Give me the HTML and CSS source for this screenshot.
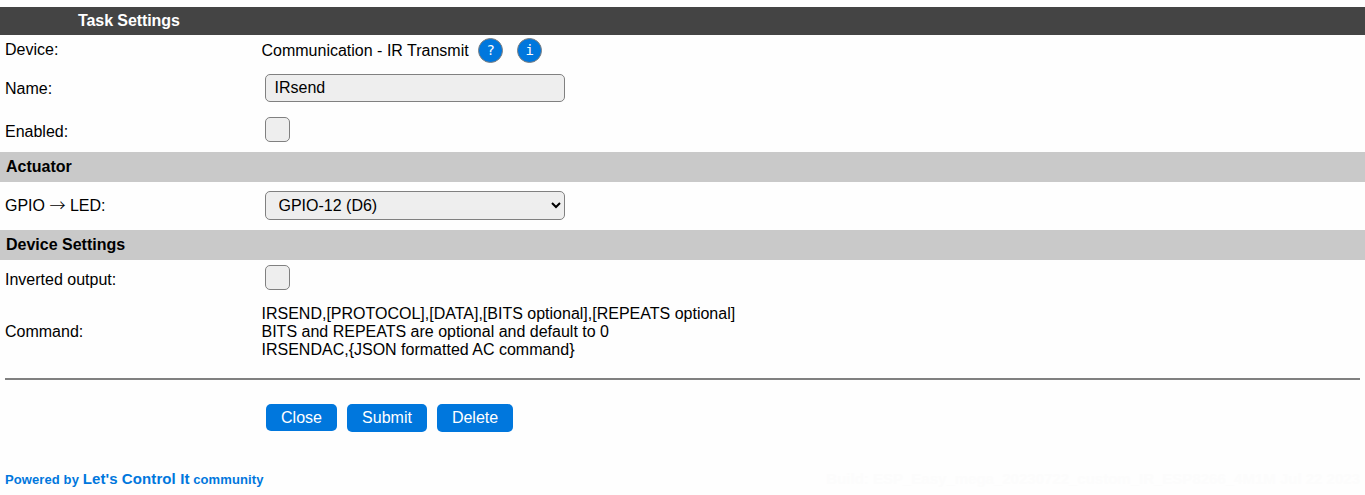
FILE: index.html
```html
<!DOCTYPE html>
<html lang="en">
<head>
<meta charset="utf-8">
<title>Task Settings</title>
<link rel="stylesheet" href="styles.css">
</head>
<body>
<form class="settings">
  <h1 class="title">Task Settings</h1>
  <div class="row device">
    <span class="label">Device:</span>
    <div class="value"><span class="kind">Communication - IR Transmit</span><a class="round help">?</a><a class="round info">i</a></div>
  </div>
  <div class="row name">
    <label class="label" for="name">Name:</label>
    <div class="value"><input class="field" id="name" type="text" value="IRsend"></div>
  </div>
  <div class="row enabled">
    <label class="label" for="enabled">Enabled:</label>
    <div class="value"><input class="check" id="enabled" type="checkbox"></div>
  </div>
  <h2 class="section">Actuator</h2>
  <div class="row gpio">
    <label class="label" for="gpio">GPIO <span class="arrow">→</span> LED:</label>
    <div class="value"><select class="field select" id="gpio"><option>GPIO-12 (D6)</option></select></div>
  </div>
  <h2 class="section">Device Settings</h2>
  <div class="row inverted">
    <label class="label" for="inverted">Inverted output:</label>
    <div class="value"><input class="check" id="inverted" type="checkbox"></div>
  </div>
  <div class="row command">
    <span class="label">Command:</span>
    <div class="value">IRSEND,[PROTOCOL],[DATA],[BITS optional],[REPEATS optional]<br>BITS and REPEATS are optional and default to 0<br>IRSENDAC,{JSON formatted AC command}</div>
  </div>
  <hr class="rule">
  <div class="actions">
    <button class="button close" type="button">Close</button>
    <button class="button submit" type="button">Submit</button>
    <button class="button delete" type="button">Delete</button>
  </div>
</form>
<footer class="footer">
  <div class="credit">Powered by <span class="brand">Let's Control It</span> community</div>
  <div class="build">Build: ESP_Easy_mega_20230722_custom_IR_ESP8266_4M1M Jul 22 2023</div>
</footer>
</body>
</html>
```

FILE: styles.css
```css
* { box-sizing: border-box; }
body {
  margin: 0;
  padding-top: 7px;
  background: #fefefe;
  color: #000;
  font: 16px/18px "Liberation Sans", Arial, sans-serif;
}
.title {
  height: 28px;
  margin: 0;
  padding-left: 78px;
  background: #444;
  color: #fff;
  font-size: 16px;
  line-height: 27px;
  letter-spacing: -0.08px;
}
.section {
  height: 30px;
  margin: 0;
  padding-left: 6px;
  background: #c9c9c9;
  font-size: 16px;
  line-height: 29px;
}
.row {
  display: grid;
  grid-template-columns: 256.5px 1fr;
  align-items: center;
  padding-left: 5px;
}
.value { display: flex; align-items: center; }
.device { height: 30px; }
.kind { padding-top: 2px; }
.name { height: 46px; }
.name .label { padding-top: 2px; }
.enabled { height: 41px; }
.enabled .value { padding-bottom: 4px; }
.gpio { height: 48px; }
.gpio .label { padding-bottom: 2px; }
.gpio .value { padding-bottom: 2px; }
.arrow { font-family: "Noto Sans CJK SC", sans-serif; font-weight: 300; line-height: 1; }
.inverted { height: 36px; }
.inverted .label { padding-top: 4px; }
.inverted .value { padding-bottom: 1px; }
.command { height: 72px; }
.command .value { display: block; }
.round {
  width: 25px;
  height: 25px;
  margin-left: 9.5px;
  border: 1px solid gray;
  border-radius: 50%;
  background: #07d;
  color: #fff;
  font: 14px/23px "DejaVu Sans Mono", monospace;
  text-align: center;
}
.info { margin-left: 14px; }
.field {
  width: 300px;
  height: 28px;
  margin: 0 0 0 3.5px;
  padding: 0 8.5px 1px;
  border: 1px solid gray;
  border-radius: 5px;
  background-color: #eee;
  color: #000;
  font: inherit;
}
.select { height: 29px; padding: 1px 7px 0 8.5px; }
.check {
  width: 25px;
  height: 25px;
  margin: 0 0 0 3.5px;
  appearance: none;
  border: 1px solid gray;
  border-radius: 5px;
  background: #eee;
}
.rule { height: 2px; margin: 10px 5px 24px; border: 0; background: gray; }
.actions { display: flex; align-items: flex-start; gap: 10px; height: 28px; padding-left: 266px; }
.button {
  height: 28px;
  padding: 0;
  border: 0;
  border-radius: 5px;
  background: #07d;
  color: #fff;
  font: inherit;
}
.close { width: 71px; height: 27px; }
.submit { width: 80px; }
.delete { width: 76px; }
.footer {
  display: flex;
  justify-content: space-between;
  margin-top: 38px;
  padding: 0 5px;
  color: #07d;
  font-size: 13px;
  font-weight: bold;
  letter-spacing: 0.1px;
}
.brand { font-size: 15px; }
.build { color: #fcfcfc; font-size: 15px; letter-spacing: 0; }
```
